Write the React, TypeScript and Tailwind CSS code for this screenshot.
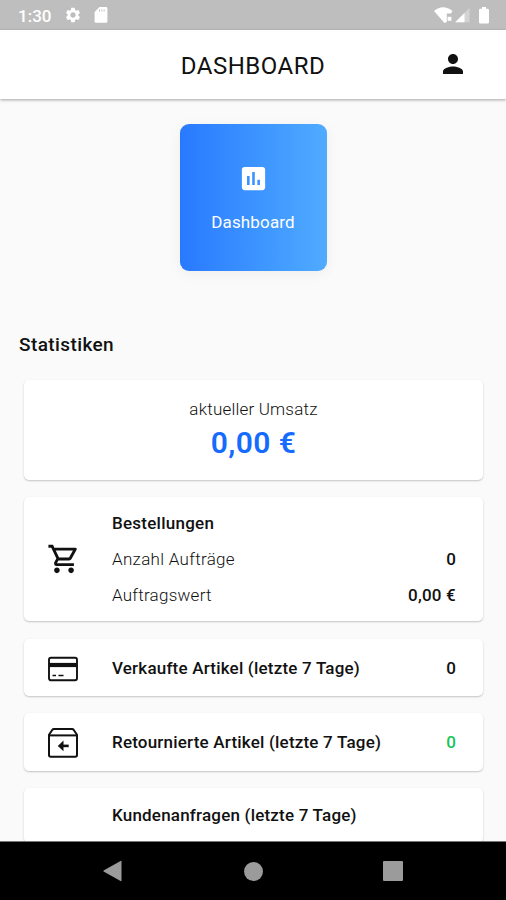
import React from 'react';
import { MdAssessment, MdOutlineShoppingCart, MdPerson, MdSettings } from 'react-icons/md';

function CardIcon() {
  return (
    <svg className="h-[30px] w-[30px]" viewBox="0 0 30 30" fill="none" stroke="#111" strokeWidth="1.9">
      <rect x="1" y="3.7" width="28" height="22.6" rx="2" />
      <path d="M1 11h28" strokeWidth="4.2" />
      <path d="M4.5 21.5h3.5M10.5 21.5h5" strokeWidth="1.6" />
    </svg>
  );
}

function ReturnIcon() {
  return (
    <svg className="h-[30px] w-[30px]" viewBox="0 0 30 30" fill="none" stroke="#111" strokeWidth="2">
      <path d="M1 6.8L4.2 2Q4.8 1.1 6 1.1h18q1.2 0 1.8.9L29 6.8V27q0 1.8-1.8 1.8H2.8Q1 28.8 1 27z" />
      <path d="M1 7.4h28" />
      <path d="M13 17.9h7.7" strokeWidth="2.6" />
      <path d="M9.8 17.9l5.7-5.3v10.6z" fill="#111" stroke="none" />
    </svg>
  );
}

function StatusBar() {
  return (
    <div className="flex h-[30px] shrink-0 items-center bg-[#bebebe] pr-[16px] pl-[18px] text-white">
      <span className="pt-[1px] text-[17px] leading-[30px] font-medium">1:30</span>
      <MdSettings className="ml-[13px] h-[18px] w-[18px]" />
      <svg className="ml-[12px] h-[16px] w-[14px]" viewBox="0 0 14 16">
        <path
          fill="white"
          fillRule="evenodd"
          d="M5.5 0H12a1.4 1.4 0 0 1 1.4 1.4v13A1.4 1.4 0 0 1 12 15.8H2A1.4 1.4 0 0 1 .6 14.4V5zM5 2.5v2h1v-2zm2.3 0v2h1v-2zm2.3 0v2h1v-2z"
        />
      </svg>
      <svg className="ml-auto h-[17px] w-[19px]" viewBox="0 0 19 17">
        <path fill="white" d="M0 4Q9-3.5 18.5 4L17 6.5h-4.2V15l-2.3 1z" />
        <path fill="white" d="M13.6 9.8h3.8v4h-3.8z" />
      </svg>
      <svg className="ml-[2px] h-[16px] w-[15px]" viewBox="0 0 15 16">
        <path fill="white" fillOpacity="0.35" d="M14.5 1v14.3H.2z" />
        <path fill="white" d="M9.5 6v9.3H.2z" />
      </svg>
      <svg className="ml-[8px] h-[17px] w-[12px]" viewBox="0 0 12 17">
        <path fill="white" d="M4 0h4v1.8h1.6q1.4 0 1.4 1.4v12q0 1.4-1.4 1.4H2.4Q1 16.6 1 15.2v-12q0-1.4 1.4-1.4H4z" />
      </svg>
    </div>
  );
}

function Card({ className, children }: { className: string; children: React.ReactNode }) {
  return (
    <div className={`rounded-[5px] bg-white shadow-[0_1px_2px_rgba(0,0,0,0.22)] ${className}`}>{children}</div>
  );
}

type StatCardProps = {
  icon: React.ReactNode;
  title: string;
  value: string;
  valueClass?: string;
  className: string;
};

function StatCard({ icon, title, value, valueClass = 'text-[#111]', className }: StatCardProps) {
  return (
    <Card className={`flex items-center pr-[27px] pl-[24px] ${className}`}>
      <div className="w-[64px]">{icon}</div>
      <div className="text-[17px] font-medium tracking-[0.2px] text-[#111]">{title}</div>
      <div className={`ml-auto text-[17px] font-medium ${valueClass}`}>{value}</div>
    </Card>
  );
}

export default function App() {
  return (
    <div className="flex h-[900px] w-[506px] flex-col overflow-hidden bg-[#fafafa] font-['Roboto',sans-serif]">
      <StatusBar />

      {/* Header */}
      <header className="relative grid h-[69px] shrink-0 grid-cols-[1fr_auto_1fr] items-center bg-white shadow-[0_1px_3px_rgba(0,0,0,0.35)]">
        <div />
        <h1 className="pt-[2px] text-[24px] leading-[30px] tracking-[0.5px] text-[#111]">DASHBOARD</h1>
        <MdPerson className="mr-[38px] mb-[1px] h-[30px] w-[30px] justify-self-end text-[#111]" />
      </header>

      <main className="flex min-h-0 flex-1 flex-col overflow-hidden">
        {/* Active tile */}
        <div className="mx-auto mt-[25px] flex h-[147px] w-[147px] shrink-0 flex-col items-center rounded-[9px] bg-linear-to-r from-[#2979ff] to-[#50abff] pt-[39px] text-white shadow-[0_3px_14px_rgba(0,0,0,0.05)]">
          <MdAssessment className="h-[31px] w-[31px]" />
          <span className="mt-[16px] text-[17px] leading-[24px] tracking-[0.15px]">Dashboard</span>
        </div>

        <h2 className="mt-[61px] ml-[19px] shrink-0 pt-[1px] text-[19px] leading-[24px] font-medium tracking-[0.4px] text-[#111]">
          Statistiken
        </h2>

        {/* Statistics */}
        <div className="mt-[23px] mr-[23px] ml-[24px] flex flex-col">
          <Card className="h-[100px] shrink-0 pt-[18px] text-center">
            <div className="text-[17px] leading-[23px] font-light tracking-[0.2px] text-[#111]">aktueller Umsatz</div>
            <div className="mt-[4px] text-[30px] leading-[36px] font-semibold tracking-[0.4px] text-[#166bff]">0,00 €</div>
          </Card>

          <Card className="mt-[17px] flex h-[124px] shrink-0 items-center pr-[27px] pl-[24px]">
            <div className="w-[64px]">
              <MdOutlineShoppingCart className="-ml-[1px] h-[34px] w-[34px] text-[#111]" />
            </div>
            <div className="flex-1 text-[17px] leading-[36px] text-[#111]">
              <div className="font-medium tracking-[0.25px]">Bestellungen</div>
              <div className="flex justify-between">
                <span className="font-light tracking-[0.3px]">Anzahl Aufträge</span>
                <span className="font-medium">0</span>
              </div>
              <div className="flex justify-between">
                <span className="font-light tracking-[0.25px]">Auftragswert</span>
                <span className="font-medium tracking-[0.2px]">0,00 €</span>
              </div>
            </div>
          </Card>

          <StatCard className="mt-[18px] h-[57px] shrink-0 pt-[2px]" icon={<CardIcon />} title="Verkaufte Artikel (letzte 7 Tage)" value="0" />
          <StatCard
            className="mt-[17px] h-[58px] shrink-0 pt-[2px]"
            icon={<ReturnIcon />}
            title="Retournierte Artikel (letzte 7 Tage)"
            value="0"
            valueClass="text-[#16c65a]"
          />
          <StatCard className="mt-[17px] h-[55px] shrink-0" icon={null} title="Kundenanfragen (letzte 7 Tage)" value="" />
        </div>
      </main>

      {/* System navigation */}
      <nav className="flex h-[59px] shrink-0 items-center border-t border-[#777] bg-black">
        <svg className="ml-[103px] h-[22px] w-[19px]" viewBox="0 0 19 22">
          <path fill="#9b9b9b" d="M18 .8q.5-.2.5.5v19.4q0 .7-.5.5L.6 11.5q-.5-.5 0-1z" />
        </svg>
        <div className="ml-[122px] h-[19px] w-[19px] rounded-full bg-[#9b9b9b]" />
        <div className="ml-[120px] h-[20px] w-[20px] rounded-[1px] bg-[#9b9b9b]" />
      </nav>
    </div>
  );
}
